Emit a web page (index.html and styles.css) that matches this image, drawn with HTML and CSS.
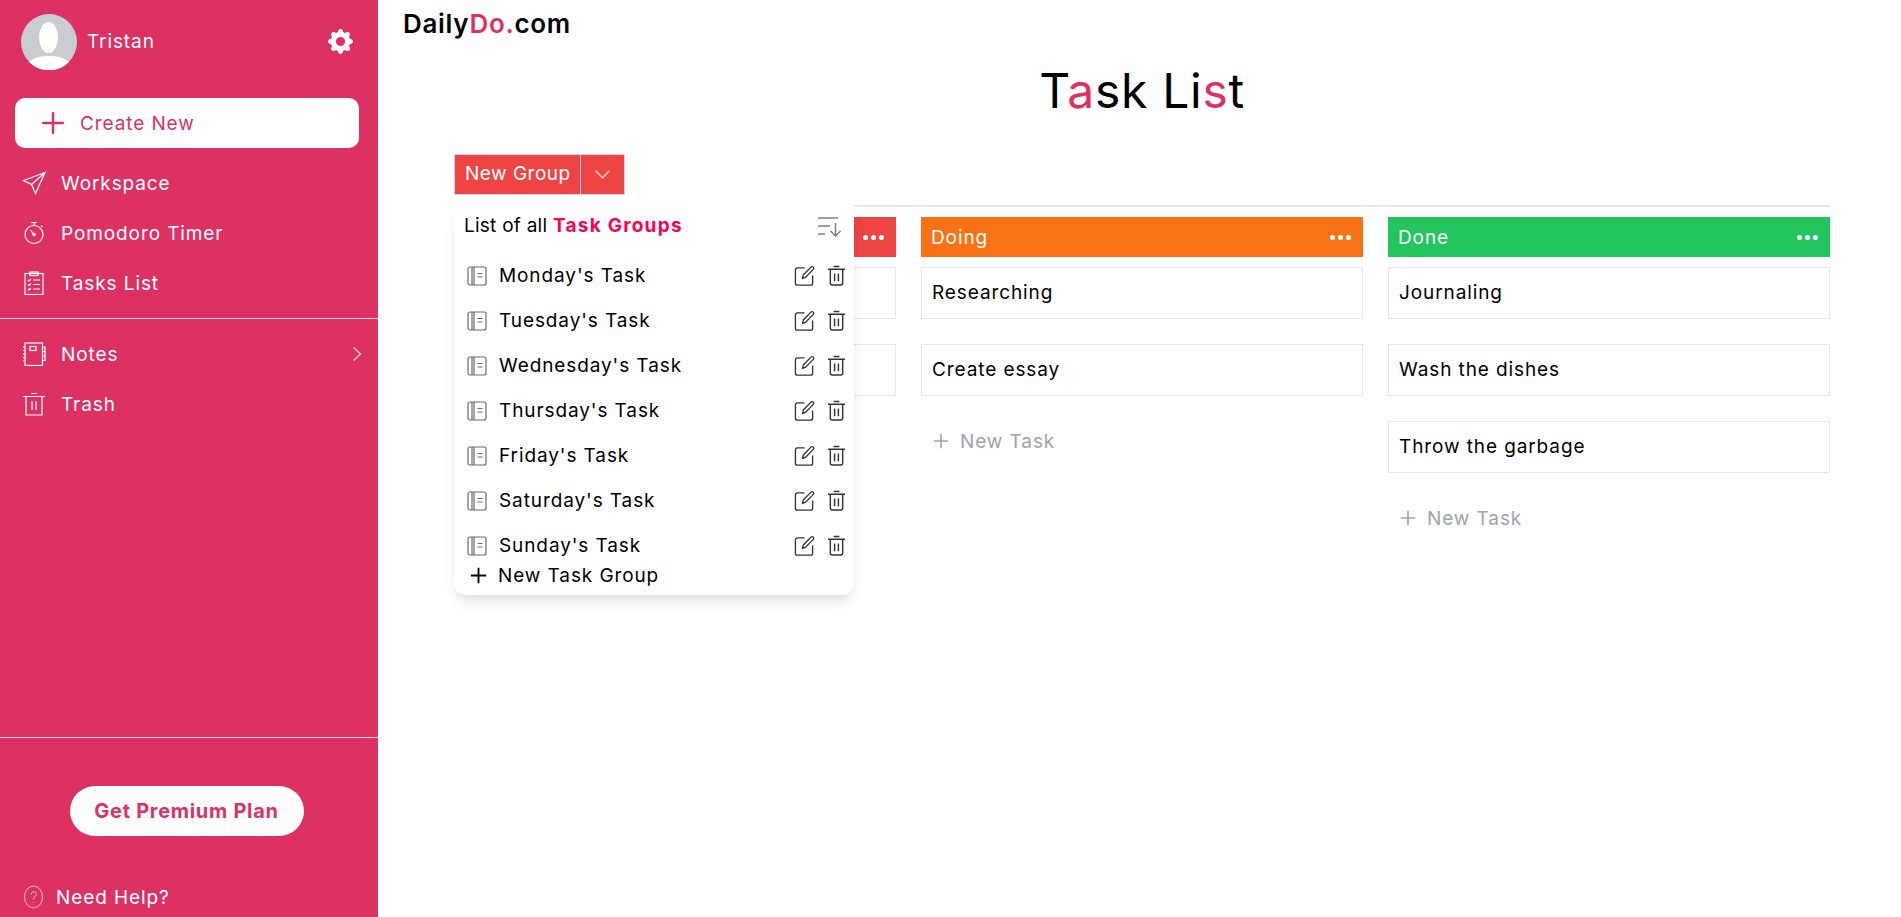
FILE: index.html
```html
<!DOCTYPE html>
<html lang="en">
<head>
    <meta charset="utf-8" />
    <title>Task List</title>
    <link rel="stylesheet" href="styles.css">
</head>
<body>
    <svg class="sprite" xmlns="http://www.w3.org/2000/svg">
        <symbol id="i-book" viewBox="0 0 20 20">
            <rect x="1" y="1" width="18" height="18" rx="2" />
            <path d="M5 1v18M7 1v18M10.500 7.500h5M10.500 11h5" />
        </symbol>
        <symbol id="i-edit" viewBox="0 0 22 22">
            <path d="M11 3H3.500A2 2 0 0 0 1.500 5v14a2 2 0 0 0 2 2h14a2 2 0 0 0 2-2v-8" />
            <path d="M9 14l.8-3.600 8-8.200a1.500 1.500 0 0 1 2.400 2.400l-8 8.200z" />
        </symbol>
        <symbol id="i-trash" viewBox="0 0 20 22">
            <path d="M1 4.500h18M3.500 4.500V19a2 2 0 0 0 2 2h9a2 2 0 0 0 2-2V4.500M7 1.500h6M8 9v8M12 9v8" />
        </symbol>
        <symbol id="i-plus" viewBox="0 0 20 20">
            <path d="M10 1v18M1 10h18" />
        </symbol>
    </svg>

    <aside class="sidebar">
        <div class="profile">
            <svg class="avatar" viewBox="0 0 56 56">
                <circle cx="28" cy="28" r="28" fill="#c9cdd2" />
                <ellipse cx="27.500" cy="23.500" rx="9.500" ry="15.500" fill="#fff" />
                <path d="M8 48c5-4.500 12-6 20-6s15 1.500 20 6a28 28 0 0 1-40 0z" fill="#fff" />
            </svg>
            <span class="profile-name">Tristan</span>
            <svg class="gear" viewBox="0 0 16 16">
                <path fill="#fff" fill-rule="evenodd" d="M9.405 1.05c-.413-1.400-2.397-1.400-2.810 0l-.100.340a1.464 1.464 0 0 1-2.105.872l-.310-.170c-1.283-.698-2.686.705-1.987 1.987l.169.311c.446.820.023 1.841-.872 2.105l-.340.100c-1.400.413-1.400 2.397 0 2.810l.340.100a1.464 1.464 0 0 1 .872 2.105l-.170.310c-.698 1.283.705 2.686 1.987 1.987l.311-.169a1.464 1.464 0 0 1 2.105.872l.100.340c.413 1.400 2.397 1.400 2.810 0l.100-.340a1.464 1.464 0 0 1 2.105-.872l.310.170c1.283.698 2.686-.705 1.987-1.987l-.169-.311a1.464 1.464 0 0 1 .872-2.105l.340-.100c1.400-.413 1.400-2.397 0-2.810l-.340-.100a1.464 1.464 0 0 1-.872-2.105l.170-.310c.698-1.283-.705-2.686-1.987-1.987l-.311.169a1.464 1.464 0 0 1-2.105-.872l-.100-.340zM8 10.930a2.929 2.929 0 1 1 0-5.860 2.929 2.929 0 0 1 0 5.860z" />
            </svg>
        </div>

        <button class="create-btn">
            <svg class="create-icon"><use href="#i-plus" /></svg>
            Create New
        </button>

        <nav class="nav">
            <a class="nav-item">
                <svg class="nav-icon" viewBox="0 0 24 24"><path d="M23 1.500L1.500 9.500l8 4 4 9zM23 1.500L9.500 13.500" /></svg>
                Workspace
            </a>
            <a class="nav-item">
                <svg class="nav-icon" viewBox="0 0 24 24"><circle cx="12" cy="13.500" r="9" /><path d="M9 1.500h6M12 1.500v3M19 4.500l1.500 1.500M12 13.500L8.500 9" /><circle cx="12" cy="13.500" r="1.200" /></svg>
                Pomodoro Timer
            </a>
            <a class="nav-item">
                <svg class="nav-icon" viewBox="0 0 24 24"><rect x="3" y="2.500" width="18" height="21" /><rect x="8" y="1" width="8" height="3.500" /><path d="M6 9l1 1 2-2M6 13.500l1 1 2-2M6 18l1 1 2-2M11 9h7M11 13.500h7M11 18h7" /></svg>
                Tasks List
            </a>
        </nav>

        <nav class="nav nav-second">
            <a class="nav-item">
                <svg class="nav-icon" viewBox="0 0 24 24"><rect x="3" y="1" width="17.500" height="22.500" /><rect x="8" y="4.500" width="6" height="4" /><path d="M20.500 5h2.500v4.500h-2.500M20.500 9.500h2.500v4.500h-2.500M20.500 14h2.500v4.500h-2.500M1 5h3M1 8.500h3M1 12h3M1 15.500h3M1 19h3" /></svg>
                Notes
                <svg class="nav-chevron" viewBox="0 0 10 16"><path d="M1.500 1.500L8.500 8l-7 6.500" /></svg>
            </a>
            <a class="nav-item">
                <svg class="nav-icon" viewBox="0 0 24 24"><path d="M1 4.500h22M4 4.500v18.500h16V4.500M9 1.500h6M10 9v9M14 9v9" /></svg>
                Trash
            </a>
        </nav>

        <div class="sidebar-foot">
            <button class="premium-btn">Get Premium Plan</button>
            <a class="help">
                <svg class="help-icon" viewBox="0 0 20 24"><ellipse cx="10" cy="12" rx="9.500" ry="11.500" /><path d="M7.500 9.500c0-4 5.500-4 5.500-.5 0 2.500-3 2.500-3 5.500M10 17.500v.8" /></svg>
                Need Help?
            </a>
        </div>
    </aside>

    <main class="main">
        <div class="logo">Daily<span class="accent">Do.</span>com</div>
        <h1 class="title">T<span class="accent">a</span>sk Li<span class="accent">s</span>t</h1>

        <div class="toolbar">
            <div class="group-btn">
                <span class="group-btn-label">New Group</span>
                <span class="group-btn-arrow">
                    <svg viewBox="0 0 16 10"><path d="M1.500 1.500L8 8l6.500-6.500" /></svg>
                </span>
            </div>

            <div class="popup">
                <div class="popup-head">
                    <span>List of all <b class="popup-strong">Task Groups</b></span>
                    <svg class="sort-icon" viewBox="0 0 25 21"><path d="M1 2h20M1 10h12M1 18h7M18.500 7v13M13.500 15l5 5 5-5" /></svg>
                </div>
                <ul class="popup-list">
                    <li class="popup-row">
                        <svg class="book-icon"><use href="#i-book" /></svg>
                        <span class="popup-name">Monday's Task</span>
                        <svg class="edit-icon"><use href="#i-edit" /></svg>
                        <svg class="trash-icon"><use href="#i-trash" /></svg>
                    </li>
                    <li class="popup-row">
                        <svg class="book-icon"><use href="#i-book" /></svg>
                        <span class="popup-name">Tuesday's Task</span>
                        <svg class="edit-icon"><use href="#i-edit" /></svg>
                        <svg class="trash-icon"><use href="#i-trash" /></svg>
                    </li>
                    <li class="popup-row">
                        <svg class="book-icon"><use href="#i-book" /></svg>
                        <span class="popup-name">Wednesday's Task</span>
                        <svg class="edit-icon"><use href="#i-edit" /></svg>
                        <svg class="trash-icon"><use href="#i-trash" /></svg>
                    </li>
                    <li class="popup-row">
                        <svg class="book-icon"><use href="#i-book" /></svg>
                        <span class="popup-name">Thursday's Task</span>
                        <svg class="edit-icon"><use href="#i-edit" /></svg>
                        <svg class="trash-icon"><use href="#i-trash" /></svg>
                    </li>
                    <li class="popup-row">
                        <svg class="book-icon"><use href="#i-book" /></svg>
                        <span class="popup-name">Friday's Task</span>
                        <svg class="edit-icon"><use href="#i-edit" /></svg>
                        <svg class="trash-icon"><use href="#i-trash" /></svg>
                    </li>
                    <li class="popup-row">
                        <svg class="book-icon"><use href="#i-book" /></svg>
                        <span class="popup-name">Saturday's Task</span>
                        <svg class="edit-icon"><use href="#i-edit" /></svg>
                        <svg class="trash-icon"><use href="#i-trash" /></svg>
                    </li>
                    <li class="popup-row">
                        <svg class="book-icon"><use href="#i-book" /></svg>
                        <span class="popup-name">Sunday's Task</span>
                        <svg class="edit-icon"><use href="#i-edit" /></svg>
                        <svg class="trash-icon"><use href="#i-trash" /></svg>
                    </li>
                </ul>
                <div class="popup-add">
                    <svg class="popup-add-icon"><use href="#i-plus" /></svg>
                    New Task Group
                </div>
            </div>
        </div>

        <div class="board">
            <section class="column">
                <div class="column-head red"><span class="dots"><i></i><i></i><i></i></span></div>
                <div class="card"></div>
                <div class="card"></div>
            </section>

            <section class="column">
                <div class="column-head orange">Doing<span class="dots"><i></i><i></i><i></i></span></div>
                <div class="card">Researching</div>
                <div class="card">Create essay</div>
                <div class="add-task">
                    <svg class="add-icon"><use href="#i-plus" /></svg>
                    New Task
                </div>
            </section>

            <section class="column">
                <div class="column-head green">Done<span class="dots"><i></i><i></i><i></i></span></div>
                <div class="card">Journaling</div>
                <div class="card">Wash the dishes</div>
                <div class="card">Throw the garbage</div>
                <div class="add-task">
                    <svg class="add-icon"><use href="#i-plus" /></svg>
                    New Task
                </div>
            </section>
        </div>
    </main>
</body>
</html>
```

FILE: styles.css
```css
* {
    box-sizing: border-box;
}

body {
    margin: 0;
    height: 917px;
    overflow: hidden;
    display: flex;
    background-color: #fff;
    color: #000;
    font-family: "Inter", "Liberation Sans", sans-serif;
    font-size: 19px;
    letter-spacing: 0.9px;
}

.sprite {
    display: none;
}

.accent {
    color: #DE3163;
}

/* sidebar */

.sidebar {
    width: 378px;
    flex-shrink: 0;
    display: flex;
    flex-direction: column;
    background-color: #DE3163;
    color: #fff;
}

.profile {
    display: flex;
    align-items: center;
    height: 57px;
    margin-top: 13px;
    padding: 0 25px 0 21px;
}

.avatar {
    width: 56px;
    height: 56px;
}

.profile-name {
    margin-left: 10px;
    margin-top: -1px;
    flex: 1;
}

.gear {
    width: 25px;
    height: 25px;
}

.create-btn {
    display: flex;
    align-items: center;
    height: 50px;
    margin: 28px 19px 0 15px;
    padding: 0 0 0 27px;
    border: 0;
    border-radius: 10px;
    background-color: #fff;
    color: #DE3163;
    font: inherit;
    letter-spacing: inherit;
}

.create-icon {
    width: 22px;
    height: 22px;
    margin-right: 16px;
    fill: none;
    stroke: #DE3163;
    stroke-width: 2.200;
    stroke-linecap: round;
}

.nav {
    display: flex;
    flex-direction: column;
    padding: 10px 0;
}

.nav-second {
    padding: 10px 0 0;
    border-top: 1px solid #f3d7df;
}

.nav-item {
    display: flex;
    align-items: center;
    height: 50px;
    padding: 0 16px 0 22px;
}

.nav-icon {
    width: 24px;
    height: 24px;
    margin-right: 15px;
    fill: none;
    stroke: #fff;
    stroke-width: 1.200;
}

.nav-chevron {
    width: 10px;
    height: 16px;
    margin-left: auto;
    fill: none;
    stroke: #f8d5df;
    stroke-width: 1.300;
}

.sidebar-foot {
    margin-top: auto;
    height: 180px;
    border-top: 1px solid #f3d7df;
    padding-top: 48px;
    display: flex;
    flex-direction: column;
}

.premium-btn {
    align-self: center;
    width: 234px;
    height: 50px;
    margin-left: -5px;
    padding: 0;
    border: 0;
    border-radius: 25px;
    background-color: #fff;
    color: #DE3163;
    font: inherit;
    font-size: 20px;
    font-weight: 700;
    letter-spacing: 0.7px;
    white-space: nowrap;
}

.help {
    display: flex;
    align-items: center;
    height: 40px;
    margin-top: 41px;
    padding-left: 24px;
}

.help-icon {
    width: 19px;
    height: 24px;
    margin-right: 13px;
    fill: none;
    stroke: #fbdde6;
    stroke-width: 0.900;
}

/* main */

.main {
    flex: 1;
    min-width: 0;
    padding: 6px 71px 0 76px;
}

.logo {
    height: 36px;
    margin-left: -51px;
    font-size: 26px;
    line-height: 36px;
    font-weight: 600;
    letter-spacing: 0.7px;
}

.title {
    height: 72px;
    margin: 13px 0 0;
    text-align: center;
    font-size: 48px;
    line-height: 72px;
    font-weight: 400;
    letter-spacing: 0.7px;
}

.toolbar {
    position: relative;
    margin-top: 27px;
    padding-bottom: 10px;
    border-bottom: 2px solid #e5e7eb;
}

.group-btn {
    display: flex;
    width: 171px;
    height: 41px;
    border: 1px solid #cbd5e1;
    background-color: #EF4444;
    color: #fff;
}

.group-btn-label {
    width: 125px;
    padding-left: 10px;
    line-height: 38px;
    letter-spacing: 0.5px;
    white-space: nowrap;
}

.group-btn-arrow {
    flex: 1;
    display: flex;
    align-items: center;
    justify-content: center;
    border-left: 1px solid #cbd5e1;
}

.group-btn-arrow svg {
    width: 17px;
    height: 11px;
    fill: none;
    stroke: #fbdada;
    stroke-width: 1.300;
}

.popup {
    position: absolute;
    left: 0;
    top: 49px;
    z-index: 2;
    width: 400px;
    height: 392px;
    padding: 0 9px 0 11px;
    background-color: #fff;
    border-radius: 0 0 12px 12px;
    box-shadow: 0 10px 15px -3px rgba(0, 0, 0, 0.1), 0 4px 6px -2px rgba(0, 0, 0, 0.05);
}

.popup-head {
    display: flex;
    align-items: center;
    justify-content: space-between;
    height: 44px;
    margin-left: -1px;
    letter-spacing: 0.25px;
}

.popup-strong {
    color: #FF0055;
    font-weight: 700;
    letter-spacing: 1.250px;
}

.sort-icon {
    width: 25px;
    height: 21px;
    margin: 2px 3px 0 0;
    fill: none;
    stroke: #808080;
    stroke-width: 1.500;
}

.popup-list {
    margin: 6px 0 0;
    padding: 0;
    list-style: none;
}

.popup-row {
    display: flex;
    align-items: center;
    height: 45px;
}

.book-icon {
    width: 20px;
    height: 20px;
    margin: 0 12px 0 2px;
    fill: none;
    stroke: #6b6b6b;
    stroke-width: 1.200;
}

.popup-name {
    flex: 1;
}

.edit-icon {
    width: 21px;
    height: 21px;
    margin-right: 12px;
    fill: none;
    stroke: #333;
    stroke-width: 1.400;
}

.trash-icon {
    width: 19px;
    height: 21px;
    margin-right: -1px;
    fill: none;
    stroke: #333;
    stroke-width: 1.500;
}

.popup-add {
    display: flex;
    align-items: center;
    height: 27px;
    margin-top: -6px;
}

.popup-add-icon {
    width: 17px;
    height: 17px;
    margin: 0 11px 0 5px;
    fill: none;
    stroke: #000;
    stroke-width: 2.200;
}

/* board */

.board {
    display: grid;
    grid-template-columns: repeat(3, 442px);
    gap: 25px;
    padding-top: 10px;
}

.column {
    display: flex;
    flex-direction: column;
}

.column-head {
    display: flex;
    align-items: center;
    height: 40px;
    margin-bottom: 10px;
    padding: 0 12px 0 10px;
    color: #fff;
}

.red {
    background-color: #EF4444;
}

.orange {
    background-color: #F97316;
}

.green {
    background-color: #22C55E;
}

.dots {
    display: flex;
    gap: 3px;
    margin-left: auto;
}

.dots i {
    width: 5px;
    height: 5px;
    border-radius: 50%;
    background-color: #fff;
}

.card {
    height: 52px;
    margin-bottom: 25px;
    padding-left: 10px;
    border: 1px solid #e5e7eb;
    line-height: 50px;
}

.add-task {
    display: flex;
    align-items: center;
    height: 40px;
    padding-left: 12px;
    color: #9ca3af;
}

.add-icon {
    width: 16px;
    height: 16px;
    margin-right: 11px;
    fill: none;
    stroke: #9ca3af;
    stroke-width: 2;
}
```
